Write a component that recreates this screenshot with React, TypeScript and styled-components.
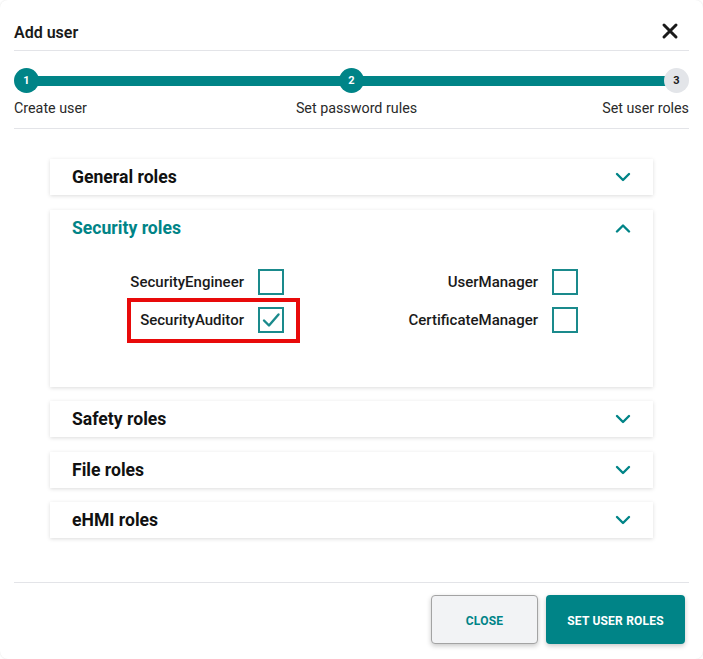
import styled, { createGlobalStyle } from "styled-components";

const GlobalStyle = createGlobalStyle`
  html, body {
    margin: 0;
    padding: 0;
    background: #ffffff;
  }
  body {
    font-family: Roboto, "Liberation Sans", Arial, sans-serif;
    color: #1f1f1f;
  }
  * { box-sizing: border-box; }
`;

const TEAL = "#008487";

const Dialog = styled.div`
  width: 703px;
  height: 659px;
  background: #ffffff;
  border-radius: 8px;
  box-shadow: 0 0 2px rgba(0, 0, 0, 0.12);
  padding: 0 14px;
  display: flex;
  flex-direction: column;
`;

const Header = styled.div`
  display: flex;
  align-items: center;
  justify-content: space-between;
  padding-top: 15px;
  height: 51px;
  border-bottom: 1px solid #e3e4e8;
`;

const Title = styled.h2`
  margin: 0;
  font-size: 16px;
  font-weight: 600;
  line-height: 35px;
  color: #1a1a1a;
`;

const CloseIcon = styled.button`
  border: none;
  background: none;
  padding: 0;
  margin-right: 10px;
  margin-top: -4px;
  width: 18px;
  height: 18px;
  display: flex;
  cursor: pointer;
`;

const Stepper = styled.div`
  padding: 17px 0 12px;
  border-bottom: 1px solid #e3e4e8;
`;

const Track = styled.div`
  display: flex;
  align-items: center;
`;

const StepDot = styled.div<{ $done: boolean }>`
  width: 25px;
  height: 25px;
  border-radius: 50%;
  flex: none;
  display: flex;
  align-items: center;
  justify-content: center;
  font-size: 11px;
  font-weight: 700;
  background: ${(p) => (p.$done ? TEAL : "#e3e5e9")};
  color: ${(p) => (p.$done ? "#ffffff" : "#1a1a1a")};
  position: relative;
  z-index: 1;
`;

const Bar = styled.div`
  flex: 1;
  height: 10px;
  background: ${TEAL};
  margin: 0 -2px;
`;

const StepLabels = styled.div`
  display: grid;
  grid-template-columns: 1fr 1fr 1fr;
  margin-top: 7px;
  font-size: 14.3px;
  line-height: 16px;
  color: #2a2a2a;
`;

const StepLabel = styled.span<{ $align: "left" | "center" | "right" }>`
  text-align: ${(p) => p.$align};
  white-space: nowrap;
  padding-left: ${(p) => (p.$align === "center" ? "10px" : "0")};
`;

const RoleList = styled.div`
  flex: 1;
  padding: 30px 36px 0;
  display: flex;
  flex-direction: column;
  gap: 14.5px;
`;

const Panel = styled.div`
  background: #ffffff;
  box-shadow: 0 1px 4px rgba(0, 0, 0, 0.14);
`;

const PanelHeader = styled.div<{ $open: boolean }>`
  height: 36px;
  padding: 0 22px;
  display: flex;
  align-items: center;
  justify-content: space-between;
  font-size: 17.6px;
  font-weight: 700;
  color: ${(p) => (p.$open ? TEAL : "#111111")};
`;

const PanelBody = styled.div`
  display: grid;
  grid-template-columns: 234px 294px;
  row-gap: 12px;
  padding: 23px 0 54px;
`;

const RoleItem = styled.label<{ $highlight?: boolean }>`
  justify-self: end;
  display: inline-flex;
  align-items: center;
  gap: 14px;
  font-size: 15px;
  font-weight: 500;
  color: #1a1a1a;
  position: relative;

  ${(p) =>
    p.$highlight &&
    `
    &::after {
      content: "";
      position: absolute;
      top: -9px;
      bottom: -10px;
      left: -13px;
      right: -16px;
      border: 4px solid #e80a0a;
      pointer-events: none;
    }
  `}
`;

const Box = styled.span`
  width: 26px;
  height: 26px;
  border: 2px solid #1a8a8c;
  background: #ffffff;
  display: flex;
  align-items: center;
  justify-content: center;
`;

const Footer = styled.div`
  border-top: 1px solid #e3e4e8;
  padding: 12px 4px 15px 0;
  display: flex;
  justify-content: flex-end;
  gap: 8px;
`;

const Button = styled.button<{ $primary?: boolean }>`
  height: 49px;
  width: ${(p) => (p.$primary ? "139px" : "107px")};
  border-radius: 4px;
  font-family: Roboto, "Liberation Sans", Arial, sans-serif;
  font-size: 12px;
  font-weight: 700;
  letter-spacing: 0.2px;
  padding: 2px 0 0;
  cursor: pointer;
  box-shadow: 0 2px 5px rgba(0, 0, 0, 0.22);
  background: ${(p) => (p.$primary ? TEAL : "#f2f3f5")};
  color: ${(p) => (p.$primary ? "#ffffff" : TEAL)};
  border: ${(p) => (p.$primary ? "none" : "1px solid #a3a3a3")};
`;

const Chevron = ({ up }: { up?: boolean }) => (
  <svg width="16" height="10" viewBox="0 0 16 10">
    <path
      d={up ? "M2 8.5 L8 2.5 L14 8.5" : "M2 2 L8 8 L14 2"}
      fill="none"
      stroke={TEAL}
      strokeWidth="2.4"
      strokeLinecap="round"
      strokeLinejoin="round"
    />
  </svg>
);

const Check = () => (
  <svg width="20" height="20" viewBox="0 0 20 20">
    <path
      d="M3 10.5 L8 15.5 L17.5 4.5"
      fill="none"
      stroke="#1a8a8c"
      strokeWidth="2.4"
      strokeLinecap="round"
      strokeLinejoin="round"
    />
  </svg>
);

type Role = { name: string; checked: boolean; highlight?: boolean };

const securityRoles: Role[] = [
  { name: "SecurityEngineer", checked: false },
  { name: "UserManager", checked: false },
  { name: "SecurityAuditor", checked: true, highlight: true },
  { name: "CertificateManager", checked: false },
];

const closedGroups = ["Safety roles", "File roles", "eHMI roles"];

const App = () => {
  return (
    <>
      <GlobalStyle />
      <Dialog>
        <Header>
          <Title>Add user</Title>
          <CloseIcon aria-label="Close">
            <svg width="18" height="18" viewBox="0 0 18 18">
              <path
                d="M3 3 L15 15 M15 3 L3 15"
                stroke="#1a1a1a"
                strokeWidth="3"
                strokeLinecap="round"
              />
            </svg>
          </CloseIcon>
        </Header>

        <Stepper>
          <Track>
            <StepDot $done>1</StepDot>
            <Bar />
            <StepDot $done>2</StepDot>
            <Bar />
            <StepDot $done={false}>3</StepDot>
          </Track>
          <StepLabels>
            <StepLabel $align="left">Create user</StepLabel>
            <StepLabel $align="center">Set password rules</StepLabel>
            <StepLabel $align="right">Set user roles</StepLabel>
          </StepLabels>
        </Stepper>

        <RoleList>
          <Panel>
            <PanelHeader $open={false}>
              General roles
              <Chevron />
            </PanelHeader>
          </Panel>
          <Panel>
            <PanelHeader $open>
              Security roles
              <Chevron up />
            </PanelHeader>
            <PanelBody>
              {securityRoles.map((r) => (
                <RoleItem key={r.name} $highlight={r.highlight}>
                  {r.name}
                  <Box>{r.checked && <Check />}</Box>
                </RoleItem>
              ))}
            </PanelBody>
          </Panel>
          {closedGroups.map((g) => (
            <Panel key={g}>
              <PanelHeader $open={false}>
                {g}
                <Chevron />
              </PanelHeader>
            </Panel>
          ))}
        </RoleList>

        <Footer>
          <Button>CLOSE</Button>
          <Button $primary>SET USER ROLES</Button>
        </Footer>
      </Dialog>
    </>
  );
};

export default App;
